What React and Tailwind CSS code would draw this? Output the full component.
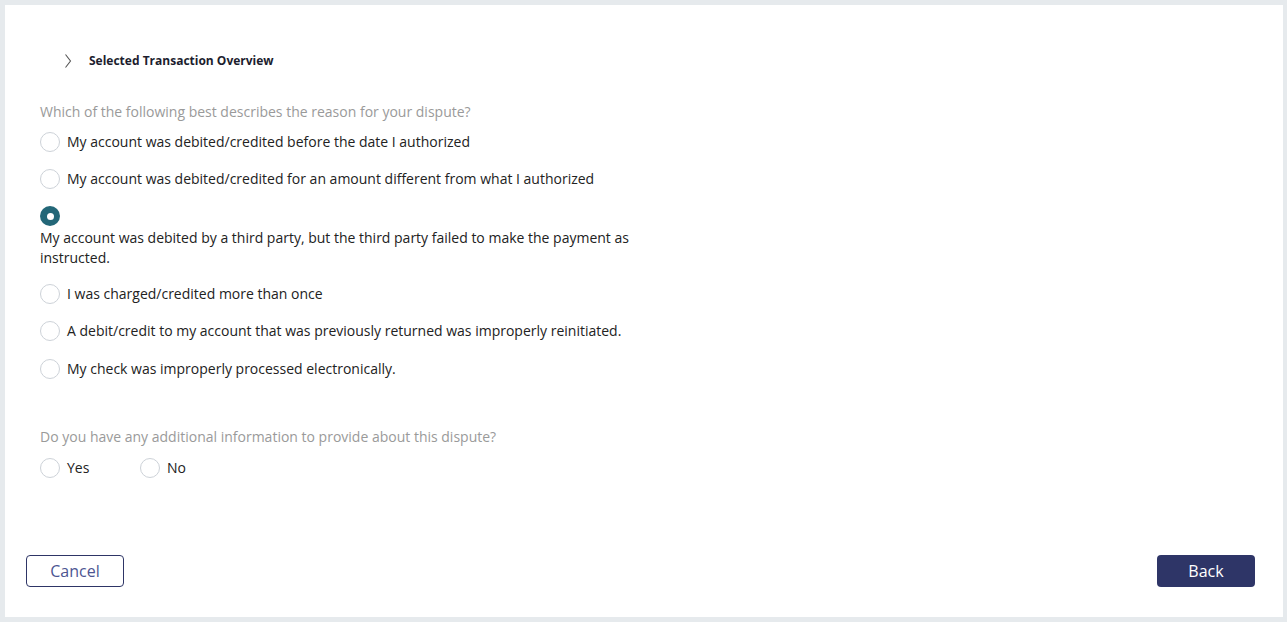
import { useState } from 'react'

const reasons = [
  'My account was debited/credited before the date I authorized',
  'My account was debited/credited for an amount different from what I authorized',
  'My account was debited by a third party, but the third party failed to make the payment as instructed.',
  'I was charged/credited more than once',
  'A debit/credit to my account that was previously returned was improperly reinitiated.',
  'My check was improperly processed electronically.',
]

function Radio({ checked }) {
  return checked ? (
    <span className="flex h-5 w-5 shrink-0 items-center justify-center rounded-full bg-[#236778]">
      <span className="h-[7px] w-[7px] rounded-full bg-white" />
    </span>
  ) : (
    <span className="h-5 w-5 shrink-0 rounded-full border border-[#cdd2d8] bg-white" />
  )
}

export default function App() {
  const [reason, setReason] = useState(2)
  const [extra, setExtra] = useState(null)

  return (
    <div className="h-[622px] w-full bg-[#e6eaed] pb-[5px] pl-[5px] pr-[4px] pt-[5px] font-['Open_Sans',sans-serif]">
      <div className="flex h-full flex-col bg-white">
        {/* Overview toggle */}
        <div className="mt-[47px] flex h-[18px] items-center">
          <svg className="ml-[58px]" width="10" height="16" viewBox="0 0 10 16" fill="none">
            <path d="M2.5 1.5 L7.5 8 L2.5 14.5" stroke="#555" strokeWidth="1.1" />
          </svg>
          <span className="ml-[16px] text-[12px] font-bold text-[#1c1d2e]">Selected Transaction Overview</span>
        </div>

        <div className="ml-[35px] mt-[32px] flex flex-col">
          <p className="text-[14px] leading-5 text-[#9a9a9a]">
            Which of the following best describes the reason for your dispute?
          </p>

          <div className="mt-[10px] flex flex-col">
            {reasons.map((r, i) =>
              i === 2 ? (
                <div key={i} className="mt-[17px] flex cursor-pointer flex-col" onClick={() => setReason(i)}>
                  <Radio checked={reason === i} />
                  <span className="mt-[2px] w-[610px] text-[14px] leading-[19.5px] text-[#222]">{r}</span>
                </div>
              ) : (
                <div
                  key={i}
                  className={`flex cursor-pointer items-center gap-[7px] ${i === 0 ? '' : i === 5 ? 'mt-[18px]' : 'mt-[17px]'}`}
                  onClick={() => setReason(i)}
                >
                  <Radio checked={reason === i} />
                  <span className="text-[14px] leading-5 text-[#222]">{r}</span>
                </div>
              )
            )}
          </div>

          <p className="mt-[48px] text-[14px] leading-5 text-[#9a9a9a]">
            Do you have any additional information to provide about this dispute?
          </p>
          <div className="mt-[11px] flex">
            <div className="flex w-[100px] cursor-pointer items-center gap-[7px]" onClick={() => setExtra('yes')}>
              <Radio checked={extra === 'yes'} />
              <span className="text-[14px] leading-5 text-[#222]">Yes</span>
            </div>
            <div className="flex cursor-pointer items-center gap-[7px]" onClick={() => setExtra('no')}>
              <Radio checked={extra === 'no'} />
              <span className="text-[14px] leading-5 text-[#222]">No</span>
            </div>
          </div>
        </div>

        <div className="mt-auto mb-[30px] flex justify-between pl-[21px] pr-[28px]">
          <button className="h-8 w-[98px] rounded-[4px] border border-[#2e3566] text-[16px] text-[#4d5592]">
            Cancel
          </button>
          <button className="h-8 w-[98px] rounded-[4px] bg-[#2e3567] text-[16px] text-white">Back</button>
        </div>
      </div>
    </div>
  )
}
